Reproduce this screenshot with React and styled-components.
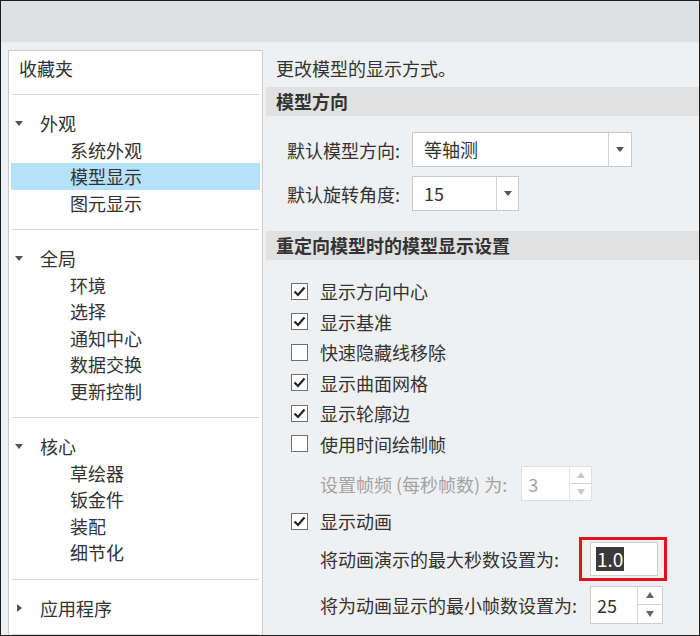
import React from 'react';
import styled, { createGlobalStyle } from 'styled-components';

const GlobalStyle = createGlobalStyle`
  html, body {
    margin: 0;
    padding: 0;
    background: #ffffff;
  }
  body {
    font-family: "Noto Sans CJK SC", "Noto Sans", sans-serif;
    color: #333;
  }
  * {
    box-sizing: border-box;
  }
`;

const Window = styled.div`
  width: 700px;
  height: 636px;
  border: 1px solid #1c1c1c;
  background: #eff0f2;
  display: flex;
  flex-direction: column;
  overflow: hidden;
`;

const TopBar = styled.div`
  height: 41px;
  flex: 0 0 auto;
  background: #dde1e2;
`;

const Body = styled.div`
  flex: 1;
  min-height: 0;
  display: flex;
  padding: 8px 0 0 7px;
  gap: 3px;
`;

const TreePanel = styled.div`
  width: 255px;
  flex: 0 0 auto;
  background: #fff;
  border: 1px solid #cacaca;
  border-bottom: none;
  padding: 0 2px;
  font-size: 18px;
`;

const Favorites = styled.div`
  padding: 4px 0 13px 8px;
  line-height: 26px;
`;

const Separator = styled.div`
  height: 1px;
  margin: 0 1px;
  background: #d6d6d6;
`;

const Group = styled.div`
  padding: 15px 0 13px;
`;

const GroupHeader = styled.div`
  display: flex;
  align-items: center;
  height: 26.5px;
  padding-left: 4px;
`;

const Caret = styled.span`
  width: 25px;
  display: flex;
  align-items: center;
  justify-content: flex-start;
  padding-left: ${({ $open }) => ($open ? '0' : '2px')};
  &::before {
    content: '';
    display: block;
    width: 0;
    height: 0;
    ${({ $open }) =>
      $open
        ? `border-left: 4px solid transparent;
           border-right: 4px solid transparent;
           border-top: 5px solid #555;`
        : `border-top: 4px solid transparent;
           border-bottom: 4px solid transparent;
           border-left: 5px solid #555;`}
  }
`;

const TreeItem = styled.div`
  height: 26.5px;
  line-height: 26.5px;
  padding-left: 59px;
  background: ${({ $selected }) => ($selected ? '#b3e2fa' : 'transparent')};
`;

const Content = styled.div`
  flex: 1;
  min-width: 0;
  font-size: 18px;
`;

const Description = styled.div`
  padding: 5px 0 6px 10px;
  line-height: 26px;
`;

const SectionHeader = styled.div`
  height: 29px;
  line-height: 29px;
  padding-left: 10px;
  background: #e1e1e1;
  font-weight: 700;
`;

const FieldBlock = styled.div`
  display: flex;
  flex-direction: column;
  gap: 9px;
  padding: 16px 0 20px 21px;
`;

const FieldRow = styled.div`
  display: flex;
  align-items: center;
`;

const FieldLabel = styled.span`
  width: 125px;
  flex: 0 0 auto;
`;

const Select = styled.div`
  width: ${({ $width }) => $width}px;
  height: 35px;
  display: flex;
  background: #fff;
  border: 1px solid #c9c9c9;
`;

const SelectValue = styled.div`
  flex: 1;
  padding-left: 11px;
  line-height: 33px;
`;

const Arrow = styled.div`
  width: ${({ $width }) => $width || 22}px;
  border-left: 1px solid #d0d0d0;
  display: flex;
  align-items: center;
  justify-content: center;
  &::before {
    content: '';
    width: 0;
    height: 0;
    border-left: 4px solid transparent;
    border-right: 4px solid transparent;
    border-top: 5px solid #555;
  }
`;

const OptionList = styled.div`
  padding: 16px 0 0 25px;
`;

const CheckRow = styled.div`
  display: flex;
  align-items: center;
  height: 30.5px;
  gap: 12px;
`;

const Box = styled.span`
  width: 17px;
  height: 17px;
  flex: 0 0 auto;
  border: 1px solid #707070;
  background: #fff;
  display: flex;
  align-items: center;
  justify-content: center;
`;

const SubRow = styled.div`
  display: flex;
  align-items: center;
  padding-left: 29px;
  color: ${({ $disabled }) => ($disabled ? '#a3a3a3' : '#333')};
  margin-top: ${({ $top }) => $top || 0}px;
  height: ${({ $height }) => $height}px;
`;

const SubLabel = styled.span`
  width: ${({ $width }) => ($width ? `${$width}px` : 'auto')};
  flex: 0 0 auto;
  margin-right: ${({ $gap }) => $gap || 0}px;
`;

const Spinner = styled.div`
  width: ${({ $width }) => $width}px;
  height: ${({ $height }) => $height}px;
  display: flex;
  background: #fff;
  border: 1px solid ${({ $disabled }) => ($disabled ? '#e0e0e0' : '#cdcdcd')};
  color: ${({ $disabled }) => ($disabled ? '#a3a3a3' : '#333')};
`;

const SpinValue = styled.div`
  flex: 1;
  padding-left: 6px;
  display: flex;
  align-items: center;
`;

const SpinButtons = styled.div`
  width: ${({ $width }) => $width}px;
  border-left: 1px solid ${({ $disabled }) => ($disabled ? '#e6e6e6' : '#d4d4d4')};
  display: flex;
  flex-direction: column;
`;

const SpinButton = styled.div`
  flex: 1;
  display: flex;
  align-items: center;
  justify-content: center;
  & + & {
    border-top: 1px solid ${({ $disabled }) => ($disabled ? '#e6e6e6' : '#d4d4d4')};
  }
  &::before {
    content: '';
    width: 0;
    height: 0;
    border-left: 4px solid transparent;
    border-right: 4px solid transparent;
    ${({ $dir, $disabled }) =>
      $dir === 'up'
        ? `border-bottom: 6px solid ${$disabled ? '#c8c8c8' : '#666'};`
        : `border-top: 6px solid ${$disabled ? '#c8c8c8' : '#666'};`}
  }
`;

const AnimationToggle = styled.div`
  margin-top: 5px;
`;

const Highlighted = styled.div`
  position: relative;
  &::after {
    content: '';
    position: absolute;
    top: -5px;
    left: -11px;
    right: -9px;
    bottom: -5px;
    border: 3px solid #e3131d;
    pointer-events: none;
  }
`;

const TextInput = styled.div`
  width: 68px;
  height: 34px;
  background: #fff;
  border: 1px solid #cdcdcd;
  display: flex;
  align-items: center;
  padding-left: 5px;
  font-size: 19px;
`;

const Selection = styled.span`
  background: #3a3a3a;
  color: #fff;
  line-height: 24px;
  padding: 0 1px;
`;

const Check = () => (
  <svg width="13" height="11" viewBox="0 0 13 11">
    <path d="M1.5 5.5 L5 9 L11.5 1.5" fill="none" stroke="#222" strokeWidth="2.2" />
  </svg>
);

const CheckOption = ({ checked, children }) => (
  <CheckRow>
    <Box>{checked && <Check />}</Box>
    <span>{children}</span>
  </CheckRow>
);

const NumberSpinner = ({ value, width, height, buttons, disabled }) => (
  <Spinner $width={width} $height={height} $disabled={disabled}>
    <SpinValue>{value}</SpinValue>
    <SpinButtons $width={buttons} $disabled={disabled}>
      <SpinButton $dir="up" $disabled={disabled} />
      <SpinButton $dir="down" $disabled={disabled} />
    </SpinButtons>
  </Spinner>
);

const groups = [
  { title: '外观', open: true, items: ['系统外观', '模型显示', '图元显示'] },
  { title: '全局', open: true, items: ['环境', '选择', '通知中心', '数据交换', '更新控制'] },
  { title: '核心', open: true, items: ['草绘器', '钣金件', '装配', '细节化'] },
  { title: '应用程序', open: false, items: [] },
];

const options = [
  { label: '显示方向中心', checked: true },
  { label: '显示基准', checked: true },
  { label: '快速隐藏线移除', checked: false },
  { label: '显示曲面网格', checked: true },
  { label: '显示轮廓边', checked: true },
  { label: '使用时间绘制帧', checked: false },
];

export default function App() {
  return (
    <>
      <GlobalStyle />
      <Window>
        <TopBar />
        <Body>
          <TreePanel>
            <Favorites>收藏夹</Favorites>
            {groups.map((g) => (
              <React.Fragment key={g.title}>
                <Separator />
                <Group>
                  <GroupHeader>
                    <Caret $open={g.open} />
                    {g.title}
                  </GroupHeader>
                  {g.items.map((item) => (
                    <TreeItem key={item} $selected={item === '模型显示'}>
                      {item}
                    </TreeItem>
                  ))}
                </Group>
              </React.Fragment>
            ))}
            <Separator />
          </TreePanel>

          <Content>
            <Description>更改模型的显示方式。</Description>
            <SectionHeader>模型方向</SectionHeader>
            <FieldBlock>
              <FieldRow>
                <FieldLabel>默认模型方向:</FieldLabel>
                <Select $width={220}>
                  <SelectValue>等轴测</SelectValue>
                  <Arrow $width={23} />
                </Select>
              </FieldRow>
              <FieldRow>
                <FieldLabel>默认旋转角度:</FieldLabel>
                <Select $width={107}>
                  <SelectValue>15</SelectValue>
                  <Arrow />
                </Select>
              </FieldRow>
            </FieldBlock>

            <SectionHeader>重定向模型时的模型显示设置</SectionHeader>
            <OptionList>
              {options.map((o) => (
                <CheckOption key={o.label} checked={o.checked}>
                  {o.label}
                </CheckOption>
              ))}
              <SubRow $disabled $top={7} $height={35}>
                <SubLabel $gap={14}>设置帧频 (每秒帧数) 为:</SubLabel>
                <NumberSpinner value="3" width={71} height={35} buttons={22} disabled />
              </SubRow>
              <AnimationToggle>
                <CheckOption checked>显示动画</CheckOption>
              </AnimationToggle>
              <SubRow $height={44}>
                <SubLabel $width={270}>将动画演示的最大秒数设置为:</SubLabel>
                <Highlighted>
                  <TextInput>
                    <Selection>1.0</Selection>
                  </TextInput>
                </Highlighted>
              </SubRow>
              <SubRow $top={5} $height={38}>
                <SubLabel $width={270}>将为动画显示的最小帧数设置为:</SubLabel>
                <NumberSpinner value="25" width={73} height={38} buttons={25} />
              </SubRow>
            </OptionList>
          </Content>
        </Body>
      </Window>
    </>
  );
}
